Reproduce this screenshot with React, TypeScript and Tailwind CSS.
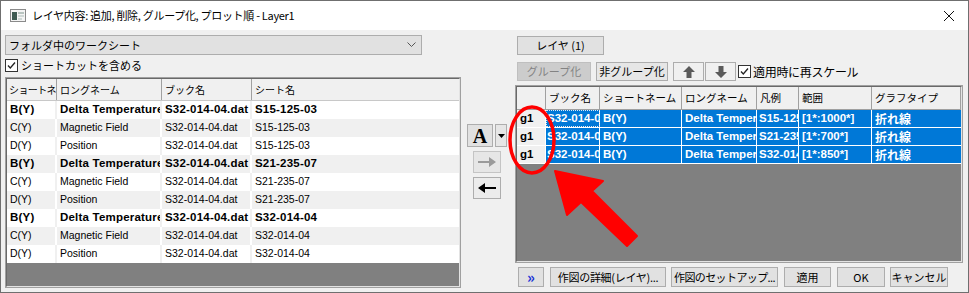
import React from "react"

const sheets = ["S15-125-03", "S21-235-07", "S32-014-04"]

const leftRows = sheets.flatMap((sh) => [
  { s: "B(Y)", l: "Delta Temperature", b: "S32-014-04.dat", sh, bold: true },
  { s: "C(Y)", l: "Magnetic Field", b: "S32-014-04.dat", sh, bold: false },
  { s: "D(Y)", l: "Position", b: "S32-014-04.dat", sh, bold: false },
])

const rightRows = [
  { legend: "S15-125-03", range: "[1*:1000*]" },
  { legend: "S21-235-07", range: "[1*:700*]" },
  { legend: "S32-014-04", range: "[1*:850*]" },
]

function Btn({
  className = "",
  disabled = false,
  children,
}: {
  className?: string
  disabled?: boolean
  children: React.ReactNode
}) {
  return (
    <div
      className={`flex items-center justify-center border text-[11px] whitespace-nowrap overflow-hidden ${
        disabled ? "bg-[#cccccc] border-[#bfbfbf] text-[#838383]" : "bg-[#e1e1e1] border-[#adadad] text-black"
      } ${className}`}
    >
      {children}
    </div>
  )
}

function Check() {
  return (
    <div className="w-[13px] h-[13px] bg-white border border-[#333333] flex items-center justify-center shrink-0">
      <svg width="11" height="11" viewBox="0 0 11 11">
        <path d="M2 5.5 L4.3 8 L9 2.5" stroke="#222" strokeWidth="1.3" fill="none" />
      </svg>
    </div>
  )
}

function HArrow({ dir, color }: { dir: "left" | "right"; color: string }) {
  return (
    <svg width="20" height="12" viewBox="0 0 20 12">
      {dir === "right" ? (
        <path d="M1 5 H12 V1 L19 6 L12 11 V7 H1 Z" fill={color} />
      ) : (
        <path d="M19 5 H8 V1 L1 6 L8 11 V7 H19 Z" fill={color} />
      )}
    </svg>
  )
}

function VArrow({ dir }: { dir: "up" | "down" }) {
  return (
    <svg width="14" height="14" viewBox="0 0 14 14">
      {dir === "up" ? (
        <path d="M7 1 L13 7 H9.5 V13 H4.5 V7 H1 Z" fill="#5a5a5a" />
      ) : (
        <path d="M7 13 L13 7 H9.5 V1 H4.5 V7 H1 Z" fill="#5a5a5a" />
      )}
    </svg>
  )
}

const cell = "flex items-center overflow-hidden whitespace-nowrap"

export default function App() {
  return (
    <div className="relative w-[969px] h-[293px] overflow-hidden bg-[#f0f0f0] border border-[#6f6f6f] font-['Noto_Sans_CJK_JP',sans-serif] text-black">
      {/* Title bar */}
      <div className="h-[29px] bg-white flex items-center pl-[9px] pr-[9px]">
        <svg width="16" height="13" viewBox="0 0 16 13">
          <rect x="0.5" y="0.5" width="15" height="12" fill="#f4f4f4" stroke="#8a8a8a" />
          <rect x="2" y="3" width="5" height="8" fill="#3e5a52" />
          <rect x="8" y="3" width="6" height="2" fill="#b8c4c0" />
          <rect x="8" y="6" width="6" height="2" fill="#d0d8d6" />
          <rect x="8" y="9" width="4" height="2" fill="#d0d8d6" />
        </svg>
        <span className="ml-[6px] text-[11px] tracking-[-0.3px]">
          レイヤ内容: 追加, 削除, グループ化, プロット順 - Layer1
        </span>
        <div className="flex-1" />
        <svg width="12" height="12" viewBox="0 0 12 12" className="mr-[4px]">
          <path d="M1 1 L11 11 M11 1 L1 11" stroke="#111" strokeWidth="1" />
        </svg>
      </div>

      <div className="flex pl-[4px]">
        {/* Left column */}
        <div className="w-[456px] pt-[5px] flex flex-col">
          <div className="h-[20px] w-[417px] bg-[#e1e1e1] border border-[#adadad] flex items-center pl-[3px] pr-[5px] text-[11px]">
            <span>フォルダ中のワークシート</span>
            <div className="flex-1" />
            <svg width="9" height="6" viewBox="0 0 9 6">
              <path d="M0.5 0.5 L4.5 4.5 L8.5 0.5" stroke="#555" strokeWidth="1" fill="none" />
            </svg>
          </div>
          <div className="mt-[3px] h-[14px] flex items-center gap-[3px] text-[11px]">
            <Check />
            <span>ショートカットを含める</span>
          </div>
          <div className="mt-[5px] h-[211px] border border-[#a0a0a0]">
            <div className="h-full border border-t-[#696969] border-l-[#696969] border-r-[#e3e3e3] border-b-[#e3e3e3] flex flex-col">
              <div className="h-[22px] flex bg-[#f0f0f0] border-b border-[#c8c8c8] text-[10px] shrink-0">
                <div className={`w-[50px] border-r border-[#a0a0a0] pl-[2px] tracking-[-0.6px] ${cell}`}>ショートネ</div>
                <div className={`w-[105px] border-r border-[#a0a0a0] pl-[3px] ${cell}`}>ロングネーム</div>
                <div className={`w-[90px] border-r border-[#a0a0a0] pl-[3px] ${cell}`}>ブック名</div>
                <div className={`flex-1 pl-[3px] ${cell}`}>シート名</div>
              </div>
              {leftRows.map((r, i) => {
                const even = i % 2 === 0
                const sep = even ? "border-[#f0f0f0]" : "border-white"
                const txt = r.bold
                  ? "font-bold text-[11.5px] tracking-[0.2px]"
                  : "text-[10.5px]"
                return (
                  <div
                    key={i}
                    className={`h-[18px] flex shrink-0 font-['Liberation_Sans',sans-serif] ${
                      even ? "bg-white" : "bg-[#f0f0f0]"
                    } ${txt}`}
                  >
                    <div className={`w-[50px] border-r-2 ${sep} pl-[3px] ${cell}`}>{r.s}</div>
                    <div className={`w-[105px] border-r-2 ${sep} pl-[3px] ${cell}`}>{r.l}</div>
                    <div className={`w-[90px] border-r-2 ${sep} pl-[3px] ${cell}`}>{r.b}</div>
                    <div className={`flex-1 pl-[3px] ${cell}`}>{r.sh}</div>
                  </div>
                )
              })}
              <div className="flex-1 bg-[#808080]" />
            </div>
          </div>
        </div>

        {/* Middle column */}
        <div className="w-[54px] pt-[94px] flex flex-col">
          <div className="flex ml-[6px] gap-[2px]">
            <Btn className="w-[26px] h-[23px]">
              <span className="font-['Liberation_Serif',serif] font-bold text-[20px] leading-none mt-[1px]">A</span>
            </Btn>
            <Btn className="w-[12px] h-[23px] bg-[#e6e6e6]">
              <svg width="7" height="4" viewBox="0 0 7 4">
                <path d="M0 0 H7 L3.5 4 Z" fill="#000" />
              </svg>
            </Btn>
          </div>
          <Btn className="ml-[12px] mt-[4px] w-[28px] h-[22px] bg-[#e6e6e6] border-[#c4c4c4]">
            <HArrow dir="right" color="#9a9a9a" />
          </Btn>
          <Btn className="ml-[12px] mt-[4px] w-[28px] h-[22px] bg-[#ececec]">
            <HArrow dir="left" color="#000" />
          </Btn>
        </div>

        {/* Right column */}
        <div className="w-[448px] pt-[6px] flex flex-col">
          <Btn className="ml-[2px] w-[87px] h-[19px]">レイヤ (1)</Btn>
          <div className="mt-[7px] h-[19px] ml-[2px] flex items-center">
            <Btn disabled className="w-[74px] h-[19px]">グループ化</Btn>
            <Btn className="ml-[5px] w-[72px] h-[19px] bg-[#e6e6e6]">非グループ化</Btn>
            <Btn className="ml-[5px] w-[31px] h-[19px] bg-[#f0f0f0]">
              <VArrow dir="up" />
            </Btn>
            <Btn className="ml-[1px] w-[31px] h-[19px] bg-[#f0f0f0]">
              <VArrow dir="down" />
            </Btn>
            <div className="ml-[2px] flex items-center gap-[2px] text-[12px] tracking-[-0.3px]">
              <Check />
              <span>適用時に再スケール</span>
            </div>
          </div>

          <div className="mt-[4px] h-[178px] border border-[#a0a0a0]">
            <div className="h-full border border-t-[#696969] border-l-[#696969] border-r-[#e3e3e3] border-b-[#e3e3e3] flex flex-col">
              <div className="h-[23px] flex bg-[#f0f0f0] border-b border-[#a0a0a0] text-[10.5px] shrink-0">
                <div className="w-[29px] border-r border-[#a0a0a0]" />
                <div className={`w-[54px] border-r border-[#a0a0a0] pl-[3px] ${cell}`}>ブック名</div>
                <div className={`w-[82px] border-r border-[#a0a0a0] pl-[3px] ${cell}`}>ショートネーム</div>
                <div className={`w-[75px] border-r border-[#a0a0a0] pl-[3px] ${cell}`}>ロングネーム</div>
                <div className={`w-[42px] border-r border-[#a0a0a0] pl-[3px] ${cell}`}>凡例</div>
                <div className={`w-[73px] border-r border-[#a0a0a0] pl-[3px] ${cell}`}>範囲</div>
                <div className={`flex-1 border-r border-[#a0a0a0] pl-[3px] ${cell}`}>グラフタイプ</div>
              </div>
              {rightRows.map((r, i) => (
                <div
                  key={i}
                  className="h-[18px] flex shrink-0 border-b border-white font-['Liberation_Sans','Noto_Sans_CJK_JP',sans-serif] font-bold text-[11.5px] text-white"
                >
                  <div className={`w-[29px] border-r border-white bg-[#f0f0f0] text-black pl-[3px] ${cell}`}>g1</div>
                  <div
                    className={`w-[54px] border-r border-white bg-[#0078d7] pl-[1px] ${cell} ${
                      i === 0 ? "outline outline-1 outline-dotted outline-[#dfe8f0] -outline-offset-1" : ""
                    }`}
                  >
                    S32-014-04.dat
                  </div>
                  <div className={`w-[82px] border-r border-white bg-[#0078d7] pl-[3px] ${cell}`}>B(Y)</div>
                  <div className={`w-[75px] border-r border-white bg-[#0078d7] pl-[3px] ${cell}`}>Delta Temperature</div>
                  <div className={`w-[42px] border-r border-white bg-[#0078d7] pl-[2px] ${cell}`}>{r.legend}</div>
                  <div className={`w-[73px] border-r border-white bg-[#0078d7] pl-[3px] ${cell}`}>{r.range}</div>
                  <div className={`flex-1 bg-[#0078d7] pl-[3px] ${cell} font-['Noto_Sans_CJK_JP',sans-serif] text-[12px]`}>折れ線</div>
                </div>
              ))}
              <div className="flex-1 bg-[#808080]" />
            </div>
          </div>

          <div className="mt-[4px] h-[20px] ml-[3px] flex text-[11px]">
            <Btn className="w-[26px] h-[20px]">
              <span className="text-[#1a33d6] font-bold text-[15px] leading-none -mt-[2px]">»</span>
            </Btn>
            <Btn className="ml-[6px] w-[116px] h-[20px] tracking-[-0.3px]">作図の詳細(レイヤ)...</Btn>
            <Btn className="ml-[5px] w-[107px] h-[20px] tracking-[-0.6px]">作図のセットアップ...</Btn>
            <Btn className="ml-[6px] w-[47px] h-[20px]">適用</Btn>
            <Btn className="ml-[6px] w-[48px] h-[20px]">OK</Btn>
            <Btn className="ml-[5px] w-[58px] h-[20px]">キャンセル</Btn>
          </div>
        </div>
      </div>

      {/* Red annotation */}
      <svg className="absolute left-0 top-0 pointer-events-none" width="969" height="293" viewBox="0 0 969 293">
        <ellipse cx="531" cy="139" rx="22" ry="33" fill="none" stroke="#ff0000" strokeWidth="3.5" />
        <polygon
          points="554,170 566,214 580,201 626,245 636,235 591,190 602,180"
          fill="#ff0000"
          strokeLinejoin="round"
          stroke="#ff0000"
          strokeWidth="2"
        />
      </svg>
    </div>
  )
}
